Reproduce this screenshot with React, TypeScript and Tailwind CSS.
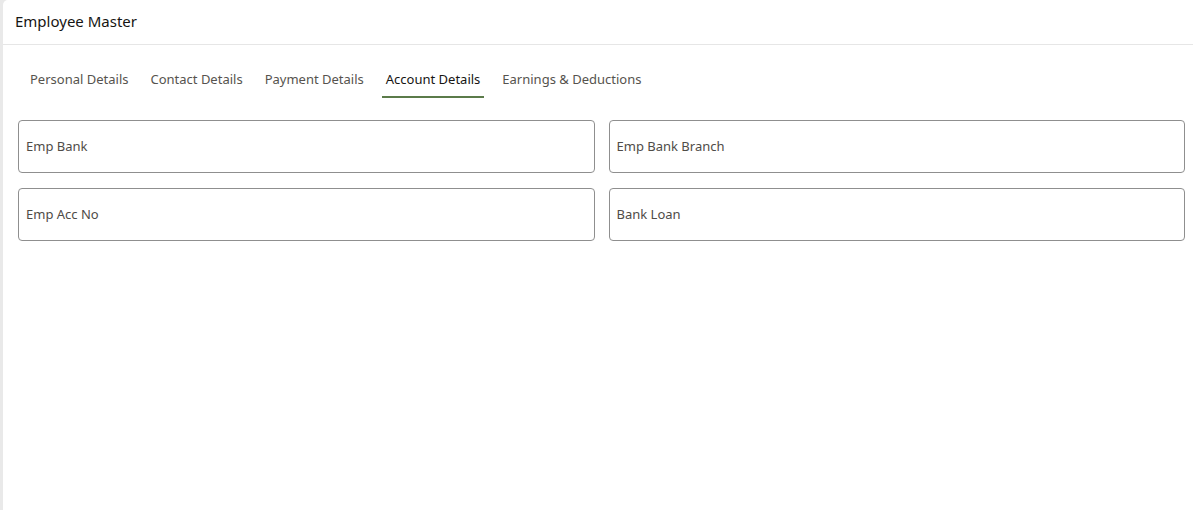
import React, { useState } from 'react';

const tabs = ['Personal Details', 'Contact Details', 'Payment Details', 'Account Details', 'Earnings & Deductions'];

const fields = ['Emp Bank', 'Emp Bank Branch', 'Emp Acc No', 'Bank Loan'];

const App: React.FC = () => {
  const [active, setActive] = useState('Account Details');

  return (
    <div className="flex h-[510px] bg-[#e9e9e9] pl-[3px] font-['Noto_Sans',sans-serif]">
      <div className="flex-1 bg-white rounded-tl-[5px] flex flex-col">
        <div className="h-[45px] border-b border-[#e6e6e6] pl-[12px] flex items-center">
          <h1 className="text-[15px] text-[#161513] leading-none -mt-[1px]">Employee Master</h1>
        </div>

        <div className="flex gap-[14px] pl-[23px] mt-[17px]">
          {tabs.map((t) => (
            <button
              key={t}
              onClick={() => setActive(t)}
              className={`h-[36px] px-[4px] pt-[2px] text-[13px] flex items-center border-b-2 ${
                active === t ? 'border-[#5b7b4a] text-[#161513]' : 'border-transparent text-[#56534e]'
              }`}
            >
              {t}
            </button>
          ))}
        </div>

        <div className="grid grid-cols-2 gap-x-[14px] gap-y-[15px] pl-[15px] pr-[8px] mt-[22px]">
          {fields.map((f) => (
            <div
              key={f}
              className="h-[53px] border border-[#8f8f8f] rounded-[4px] px-[7px] flex items-center text-[13px] text-[#4f4c48]"
            >
              {f}
            </div>
          ))}
        </div>
      </div>
    </div>
  );
};

export default App;
